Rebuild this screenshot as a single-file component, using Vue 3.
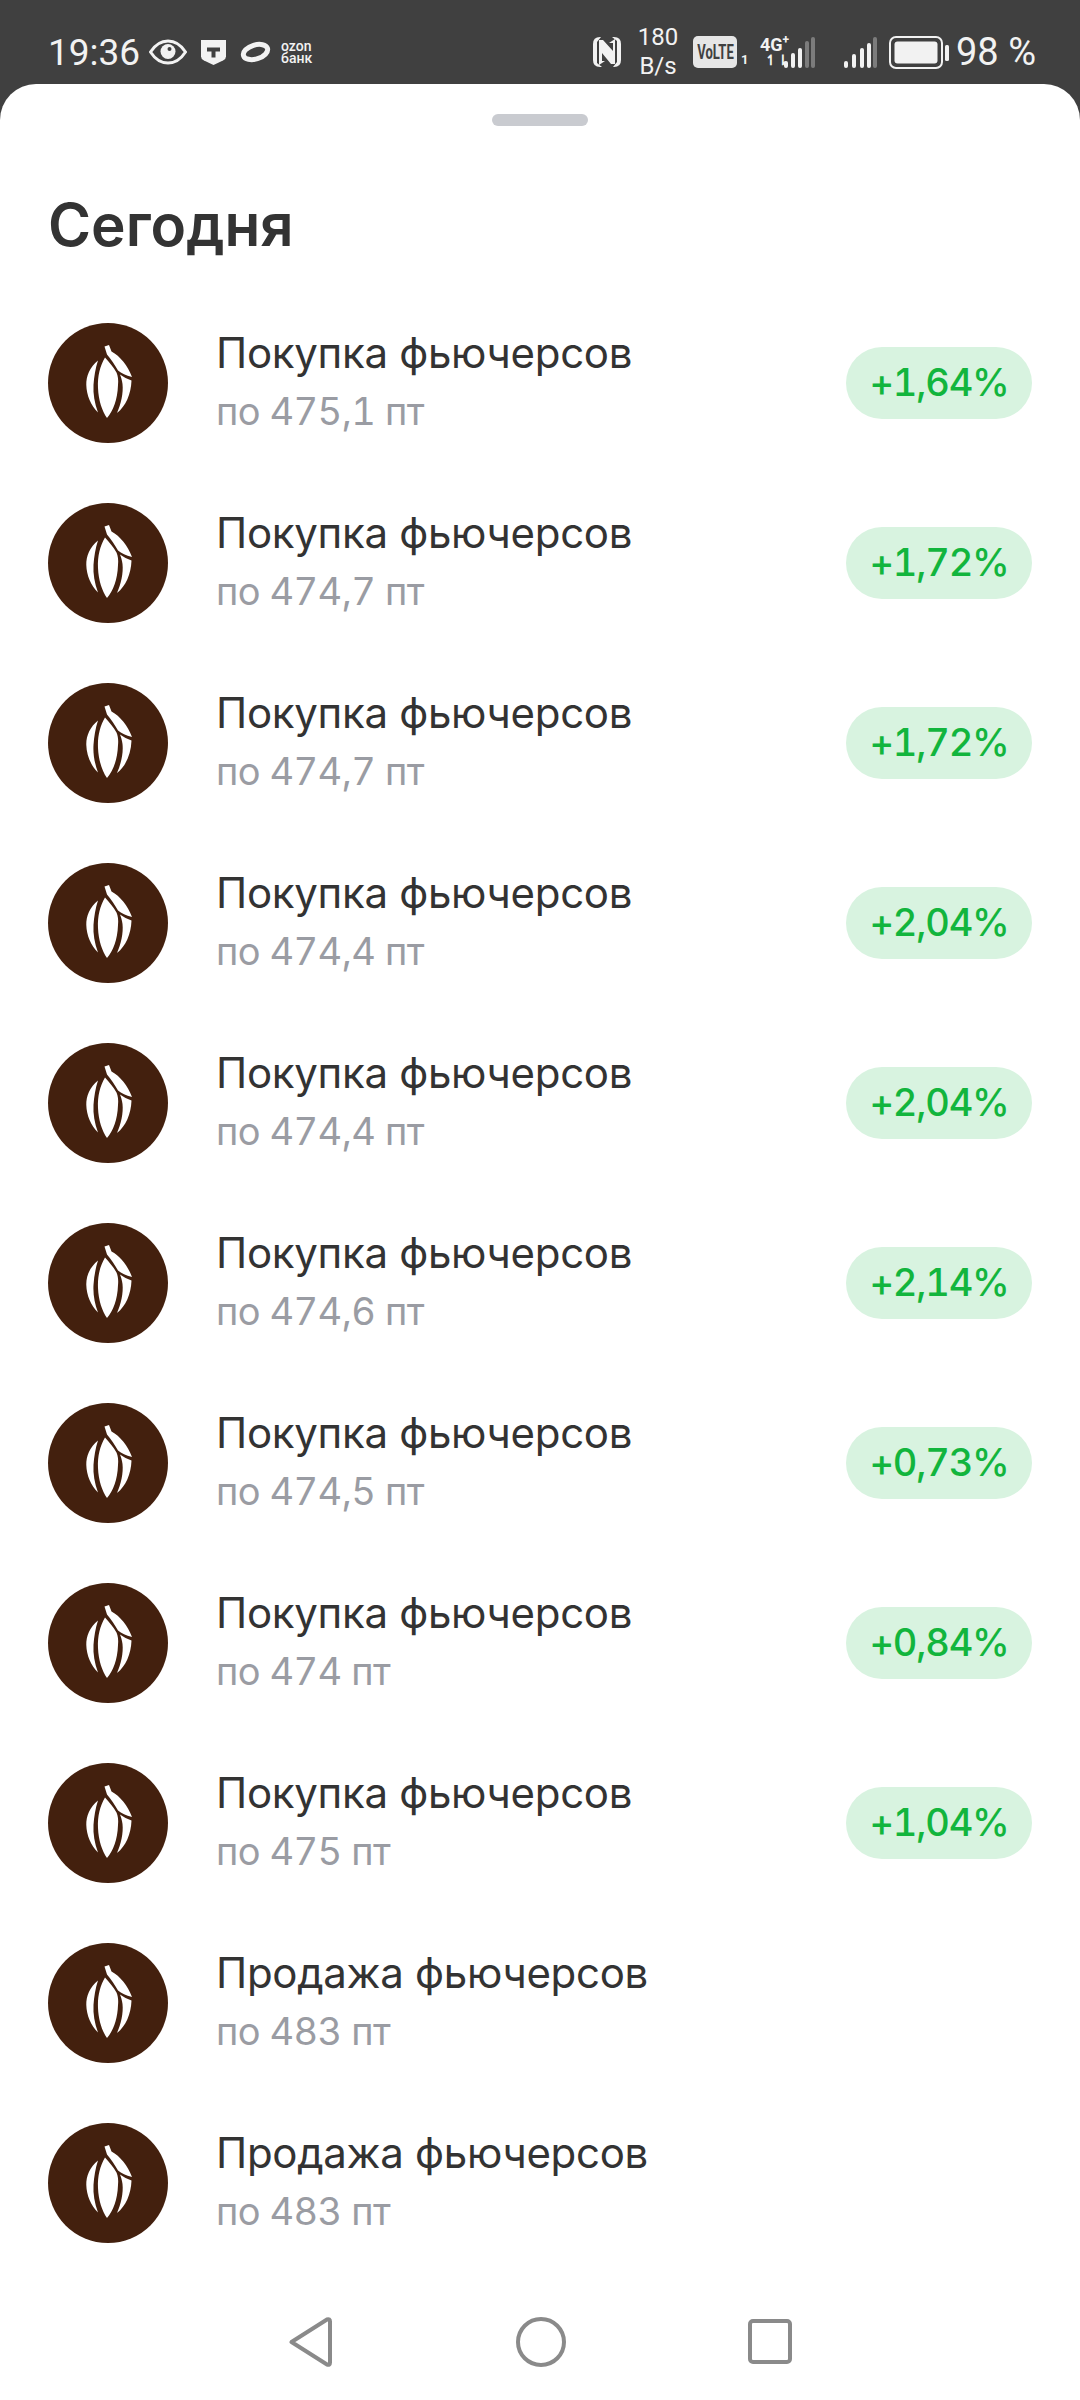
<template>
  <div class="screen">
    <header class="status">
      <div class="status_left">
        <span class="time">19:36</span>
        <svg class="eye" viewBox="0 0 38 26">
          <path d="M1.500 13C7 4.500 12.500 2 19 2s12 2.500 17.500 11C31 21.500 25.500 24 19 24S7 21.500 1.500 13Z" fill="none" stroke="#f2f2f2" stroke-width="3" />
          <circle cx="19" cy="12.500" r="7.500" fill="#f2f2f2" />
          <circle cx="20.500" cy="10" r="2" fill="#404040" />
        </svg>
        <svg class="shield" viewBox="0 0 25 25">
          <path d="M0 0H25V16.500Q25 19 22 20.500L12.500 25 3 20.500Q0 19 0 16.500Z" fill="#f2f2f2" />
          <path d="M6 7.500H19V11.500H14.500V17.500H10.500V11.500H6Z" fill="#404040" />
        </svg>
        <svg class="ozon_ring" viewBox="0 0 31 22">
          <ellipse cx="15.500" cy="11" rx="12.500" ry="7" transform="rotate(-17 15.500 11)" fill="none" stroke="#f2f2f2" stroke-width="5" />
        </svg>
        <span class="ozon_text">ozon<br />банк</span>
      </div>
      <div class="status_right">
        <svg class="nfc" viewBox="0 0 28 30">
          <path d="M8 0H7Q0 0 0 7V23Q0 30 7 30H9L4 26V5Z" fill="#f2f2f2" />
          <path d="M20 30H21Q28 30 28 23V7Q28 0 21 0H19L24 4V25Z" fill="#f2f2f2" />
          <path d="M6 3H10L20 14V6H16L22 2V27H18L9 16V24H12L6 28Z" fill="#f2f2f2" />
        </svg>
        <span class="speed">180<br />B/s</span>
        <span class="volte"><span class="volte_text">VoLTE</span></span>
        <span class="sim">1</span>
        <div class="net">
          <span class="net_type">4G<sup>+</sup></span>
          <span class="net_arrows">↿⇂</span>
        </div>
        <svg class="bars bars_first" viewBox="0 0 31 31">
          <rect x="0" y="24" width="4" height="7" rx="2" fill="#f2f2f2" />
          <rect x="7" y="16" width="4" height="15" rx="2" fill="#f2f2f2" />
          <rect x="14" y="11" width="4" height="20" rx="2" fill="#f2f2f2" />
          <rect x="21" y="4" width="4" height="27" rx="2" fill="#7c7c7c" />
          <rect x="27" y="0" width="4" height="31" rx="2" fill="#7c7c7c" />
        </svg>
        <svg class="bars bars_second" viewBox="0 0 33 31">
          <rect x="0" y="24" width="4" height="7" rx="2" fill="#f2f2f2" />
          <rect x="8" y="17" width="4" height="14" rx="2" fill="#f2f2f2" />
          <rect x="16" y="11" width="4" height="20" rx="2" fill="#f2f2f2" />
          <rect x="23" y="6" width="4" height="25" rx="2" fill="#f2f2f2" />
          <rect x="29" y="0" width="4" height="31" rx="2" fill="#7c7c7c" />
        </svg>
        <svg class="battery" viewBox="0 0 60 33">
          <rect x="1" y="1" width="52" height="31" rx="6" fill="none" stroke="#f2f2f2" stroke-width="2" />
          <rect x="5.500" y="5.500" width="43" height="22" rx="3" fill="#f2f2f2" />
          <rect x="56" y="9" width="4" height="16" rx="1.500" fill="#f2f2f2" />
        </svg>
        <span class="charge">98 %</span>
      </div>
    </header>

    <main class="sheet">
      <div class="handle"></div>
      <h1 class="title">Сегодня</h1>
      <ul class="list">
        <li v-for="(item, i) in items" :key="i" class="row">
          <div class="avatar">
            <svg viewBox="0 0 120 120" width="120" height="120">
              <path d="M56.500 23.500 61 22 63.500 28.500C72 33 80 43 84 54 78 52.500 73.500 50.500 70 47.500 67 42 63 36.500 59 31.500Z" fill="#fff" />
              <path d="M57 34.500C52 43 49.500 53 50 65 50.500 77 54 88 59 95 65 88 69.500 77 70 62 70.500 57 70 53 68.500 49.500 65.500 44 61 39 57 34.500Z" fill="#fff" />
              <path d="M50 37.500C42 44 38 53 38.300 62 38.500 72 43 83 50 89.500 46.500 80 45 71 45.500 62 46 54 47.500 45 50 37.500Z" fill="#fff" />
              <path d="M72 51.500C75.500 54 79.500 56 83.500 57.500 83 71 78 83 69 90 73 81 75.500 70 74.500 61 74 57 73 54 72 51.500Z" fill="#fff" />
            </svg>
          </div>
          <div class="info">
            <div class="name">{{ item.name }}</div>
            <div class="price">{{ item.price }}</div>
          </div>
          <span v-if="item.profit" class="profit">{{ item.profit }}</span>
        </li>
      </ul>
      <nav class="nav">
        <svg class="nav_back" viewBox="0 0 43 50">
          <path d="M2.500 25 38 2.500Q41 1.500 41 4.500V45.500Q41 48.500 38 47.500Z" fill="none" stroke="#8a8a8a" stroke-width="4" stroke-linejoin="round" />
        </svg>
        <svg class="nav_home" viewBox="0 0 50 50">
          <circle cx="25" cy="25" r="23" fill="none" stroke="#8a8a8a" stroke-width="4" />
        </svg>
        <svg class="nav_recent" viewBox="0 0 44 45">
          <rect x="2" y="2" width="40" height="41" rx="3" fill="none" stroke="#8a8a8a" stroke-width="4" />
        </svg>
      </nav>
    </main>
  </div>
</template>

<script setup>
const buy = 'Покупка фьючерсов'
const sell = 'Продажа фьючерсов'

const items = [
  { name: buy, price: 'по 475,1 пт', profit: '+1,64%' },
  { name: buy, price: 'по 474,7 пт', profit: '+1,72%' },
  { name: buy, price: 'по 474,7 пт', profit: '+1,72%' },
  { name: buy, price: 'по 474,4 пт', profit: '+2,04%' },
  { name: buy, price: 'по 474,4 пт', profit: '+2,04%' },
  { name: buy, price: 'по 474,6 пт', profit: '+2,14%' },
  { name: buy, price: 'по 474,5 пт', profit: '+0,73%' },
  { name: buy, price: 'по 474 пт', profit: '+0,84%' },
  { name: buy, price: 'по 475 пт', profit: '+1,04%' },
  { name: sell, price: 'по 483 пт' },
  { name: sell, price: 'по 483 пт' },
]
</script>

<style>
html,
body {
  margin: 0;
  background: #404040;
}
</style>

<style scoped>
.screen {
  width: 1080px;
  height: 2400px;
  overflow: hidden;
  display: flex;
  flex-direction: column;
  background: #404040;
  font-family: Inter, Roboto, sans-serif;
}
.status {
  height: 84px;
  flex-shrink: 0;
  padding: 20px 43px 0 48px;
  box-sizing: border-box;
  display: flex;
  align-items: center;
  justify-content: space-between;
  color: #f2f2f2;
  font-family: Roboto, sans-serif;
}
.status_left,
.status_right {
  display: flex;
  align-items: center;
}
.time {
  font-size: 37px;
  width: 101px;
  white-space: nowrap;
}
.eye {
  width: 38px;
  height: 26px;
}
.shield {
  width: 25px;
  height: 25px;
  margin-left: 14px;
}
.ozon_ring {
  width: 31px;
  height: 22px;
  margin-left: 14px;
}
.ozon_text {
  margin-left: 10px;
  font-size: 14px;
  line-height: 12px;
  font-weight: 500;
}
.nfc {
  width: 28px;
  height: 30px;
}
.speed {
  width: 44px;
  margin-left: 15px;
  font-size: 24px;
  line-height: 29px;
  text-align: center;
}
.volte {
  width: 44px;
  height: 32px;
  margin-left: 13px;
  border-radius: 5px;
  background: #e6e6e6;
  color: #404040;
  font-size: 21px;
  font-weight: 700;
  line-height: 32px;
  text-align: center;
  overflow: hidden;
}
.volte_text {
  display: inline-block;
  transform: scaleX(0.62);
  transform-origin: center;
  margin: 0 -10px;
}
.sim {
  width: 8px;
  margin: 14px 0 0 4px;
  font-size: 13px;
  font-weight: 700;
}
.net {
  width: 27px;
  margin-left: 11px;
  display: flex;
  flex-direction: column;
  font-weight: 700;
}
.net_type {
  font-size: 18px;
  line-height: 17px;
  white-space: nowrap;
}
.net_type sup {
  font-size: 12px;
  line-height: 0;
}
.net_arrows {
  font-size: 14px;
  line-height: 15px;
  margin-left: 5px;
  white-space: nowrap;
}
.bars {
  height: 31px;
}
.bars_first {
  width: 31px;
  margin-left: -3px;
}
.bars_second {
  width: 33px;
  margin-left: 29px;
}
.battery {
  width: 60px;
  height: 33px;
  margin-left: 12px;
}
.charge {
  margin-left: 7px;
  width: 81px;
  font-size: 38px;
  white-space: nowrap;
}
.sheet {
  flex: 1;
  background: #fff;
  border-radius: 36px 36px 0 0;
  display: flex;
  flex-direction: column;
}
.handle {
  width: 96px;
  height: 12px;
  margin: 30px auto 0;
  border-radius: 6px;
  background: #c9cbd0;
}
.title {
  margin: 64px 0 0 48px;
  font-size: 58.500px;
  line-height: 70px;
  font-weight: 600;
  color: #333;
}
.list {
  list-style: none;
  margin: 33px 0 0;
  padding: 0 48px;
}
.row {
  height: 180px;
  display: flex;
  align-items: center;
}
.avatar {
  width: 120px;
  height: 120px;
  flex-shrink: 0;
  border-radius: 50%;
  background: #43200e;
}
.info {
  margin-left: 48px;
  flex: 1;
  padding-bottom: 2px;
}
.name {
  font-size: 42px;
  line-height: 54px;
  letter-spacing: -0.300px;
  color: #333;
  margin-top: -3px;
}
.price {
  font-size: 38px;
  line-height: 48px;
  letter-spacing: -0.600px;
  font-variant-numeric: tabular-nums;
  color: #9a9ca3;
  margin-top: 7px;
}
.profit {
  width: 186px;
  height: 72px;
  border-radius: 36px;
  background: #d8f3e0;
  color: #12b53d;
  font-size: 38px;
  line-height: 70px;
  letter-spacing: -1.200px;
  text-align: center;
  font-weight: 500;
  font-variant-numeric: tabular-nums;
}
.nav {
  margin-top: 44px;
  display: flex;
  justify-content: center;
  align-items: flex-start;
  gap: 184px;
}
.nav_back {
  width: 43px;
  height: 50px;
}
.nav_home {
  width: 50px;
  height: 50px;
}
.nav_recent {
  width: 44px;
  height: 45px;
  margin: 2px 0 0 -2px;
}
</style>
